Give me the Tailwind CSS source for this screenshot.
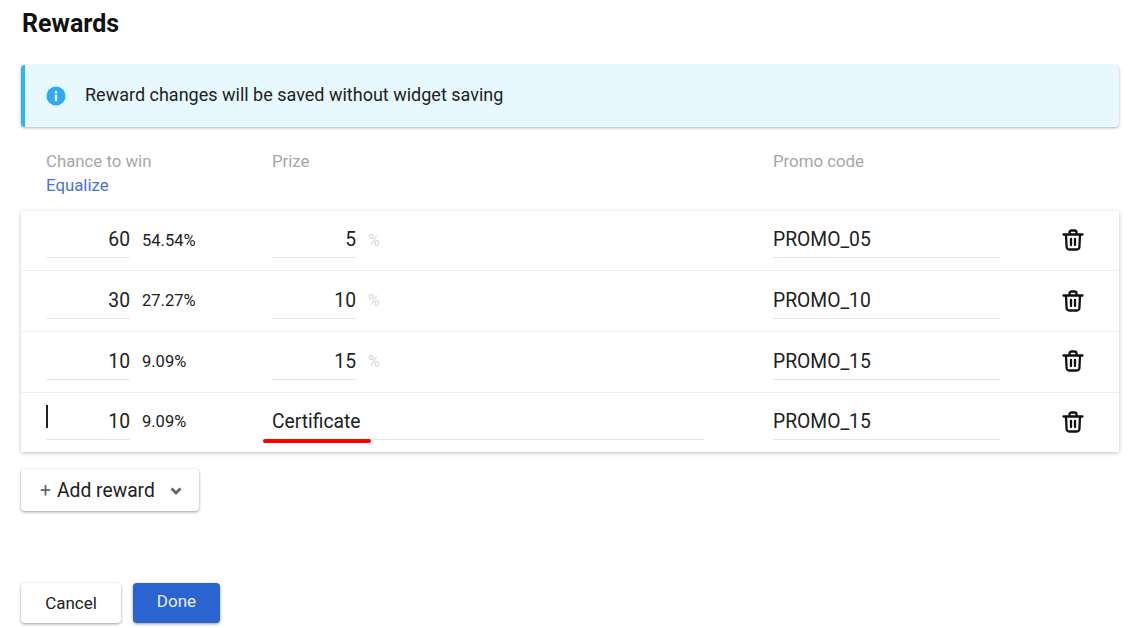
<!DOCTYPE html>
<html lang="en">
<head>
  <meta charset="UTF-8">
  <title>Rewards</title>
  <script src="https://cdn.jsdelivr.net/npm/@tailwindcss/browser@4"></script>
</head>
<body class="bg-white font-['Roboto',sans-serif] text-[#212121] overflow-hidden">
  <div class="w-[1141px] h-[628px] pl-[21px] pr-[22px] overflow-hidden">
    <h1 class="pl-px h-[47px] text-[25px] leading-[47px] font-bold text-[#111]">Rewards</h1>

    <div class="mt-[18px] h-[62px] flex items-center bg-[#e7f9ff] border-l-4 border-[#29b6f6] rounded shadow-[0_1px_3px_rgba(0,0,0,0.3)]">
      <svg class="ml-[21px] w-[20px] h-[20px]" viewBox="0 0 20 20">
        <circle cx="10" cy="10" r="9.500" fill="#2fa9f2"/>
        <rect x="8.800" y="8.600" width="2.400" height="6.600" fill="#e7f9ff"/>
        <rect x="8.800" y="5" width="2.400" height="2.400" fill="#e7f9ff"/>
      </svg>
      <span class="ml-[19px] mb-[4px] text-[18px]">Reward changes will be saved without widget saving</span>
    </div>

    <div class="mt-[22px] h-[62px] flex pl-[25px] text-[16.800px] leading-[24px] text-[#a6a6a6]">
      <div class="w-[226px]">
        <div>Chance to win</div>
        <div class="text-[#4a72d9]">Equalize</div>
      </div>
      <div class="w-[501px]">Prize</div>
      <div>Promo code</div>
    </div>

    <div class="h-[241px] flex flex-col shadow-[0_1px_4px_rgba(0,0,0,0.25)]">
      <div class="h-[60px] flex pl-[25px] border-b-[1.5px] border-[#eeeeee]">
        <div class="w-[84px] h-[47px] border-b-[1.5px] border-[#e4e4e4] text-right text-[19.300px] leading-[57px]">60</div>
        <div class="w-[142px] pl-[12px] text-[16.500px] leading-[59px]">54.54%</div>
        <div class="w-[84px] h-[47px] border-b-[1.5px] border-[#e4e4e4] text-right text-[19.300px] leading-[57px]">5</div>
        <div class="w-[417px] pl-[12px] text-[16px] leading-[59px] text-[#d8d8d8]">%</div>
        <div class="w-[227px] h-[47px] border-b-[1.5px] border-[#e4e4e4] text-[19.300px] leading-[57px]">PROMO_05</div>
        <svg class="ml-[61px] mt-[17px] w-[24px] h-[24px]" viewBox="0 0 24 24" fill="none" stroke="#111" stroke-width="2.300" stroke-linecap="round" stroke-linejoin="round"><path d="M2.500 6.500h19M8.500 6V4.500a2 2 0 0 1 2-2h3a2 2 0 0 1 2 2V6M5 7l.6 12a2.500 2.500 0 0 0 2.500 2.500h7.800a2.500 2.500 0 0 0 2.500-2.500L19 7M10 11v6M14 11v6"/></svg>
      </div>
      <div class="h-[61px] flex pl-[25px] border-b-[1.5px] border-[#eeeeee]">
        <div class="w-[84px] h-[48px] border-b-[1.5px] border-[#e4e4e4] text-right text-[19.300px] leading-[59px]">30</div>
        <div class="w-[142px] pl-[12px] text-[16.500px] leading-[59px]">27.27%</div>
        <div class="w-[84px] h-[48px] border-b-[1.5px] border-[#e4e4e4] text-right text-[19.300px] leading-[59px]">10</div>
        <div class="w-[417px] pl-[12px] text-[16px] leading-[59px] text-[#d8d8d8]">%</div>
        <div class="w-[227px] h-[48px] border-b-[1.5px] border-[#e4e4e4] text-[19.300px] leading-[59px]">PROMO_10</div>
        <svg class="ml-[61px] mt-[18px] w-[24px] h-[24px]" viewBox="0 0 24 24" fill="none" stroke="#111" stroke-width="2.300" stroke-linecap="round" stroke-linejoin="round"><path d="M2.500 6.500h19M8.500 6V4.500a2 2 0 0 1 2-2h3a2 2 0 0 1 2 2V6M5 7l.6 12a2.500 2.500 0 0 0 2.500 2.500h7.800a2.500 2.500 0 0 0 2.500-2.500L19 7M10 11v6M14 11v6"/></svg>
      </div>
      <div class="h-[61px] flex pl-[25px] border-b-[1.5px] border-[#eeeeee]">
        <div class="w-[84px] h-[48px] border-b-[1.5px] border-[#e4e4e4] text-right text-[19.300px] leading-[59px]">10</div>
        <div class="w-[142px] pl-[12px] text-[16.500px] leading-[60px]">9.09%</div>
        <div class="w-[84px] h-[48px] border-b-[1.5px] border-[#e4e4e4] text-right text-[19.300px] leading-[59px]">15</div>
        <div class="w-[417px] pl-[12px] text-[16px] leading-[60px] text-[#d8d8d8]">%</div>
        <div class="w-[227px] h-[48px] border-b-[1.5px] border-[#e4e4e4] text-[19.300px] leading-[59px]">PROMO_15</div>
        <svg class="ml-[61px] mt-[17px] w-[24px] h-[24px]" viewBox="0 0 24 24" fill="none" stroke="#111" stroke-width="2.300" stroke-linecap="round" stroke-linejoin="round"><path d="M2.500 6.500h19M8.500 6V4.500a2 2 0 0 1 2-2h3a2 2 0 0 1 2 2V6M5 7l.6 12a2.500 2.500 0 0 0 2.500 2.500h7.800a2.500 2.500 0 0 0 2.500-2.500L19 7M10 11v6M14 11v6"/></svg>
      </div>
      <div class="h-[59px] flex pl-[25px]">
        <div class="relative w-[84px] h-[47px] border-b-[1.5px] border-[#e4e4e4] text-right text-[19.300px] leading-[57px]">
          10
          <span class="absolute left-0 top-[12px] w-[2px] h-[23px] bg-[#222]"></span>
        </div>
        <div class="w-[142px] pl-[12px] text-[16.500px] leading-[58px]">9.09%</div>
        <div class="relative w-[432px] h-[47px] border-b-[1.5px] border-[#e4e4e4] text-[19.300px] leading-[57px]">
          Certificate
          <span class="absolute left-[-9px] top-[46px] w-[108px] h-[3.500px] rounded-full bg-[#ff0000]"></span>
        </div>
        <div class="w-[69px]"></div>
        <div class="w-[227px] h-[47px] border-b-[1.5px] border-[#e4e4e4] text-[19.300px] leading-[57px]">PROMO_15</div>
        <svg class="ml-[61px] mt-[17px] w-[24px] h-[24px]" viewBox="0 0 24 24" fill="none" stroke="#111" stroke-width="2.300" stroke-linecap="round" stroke-linejoin="round"><path d="M2.500 6.500h19M8.500 6V4.500a2 2 0 0 1 2-2h3a2 2 0 0 1 2 2V6M5 7l.6 12a2.500 2.500 0 0 0 2.500 2.500h7.800a2.500 2.500 0 0 0 2.500-2.500L19 7M10 11v6M14 11v6"/></svg>
      </div>
    </div>

    <button class="mt-[17px] w-[178px] h-[42px] flex items-center pl-[19px] pt-[2px] rounded bg-white text-[19.300px] shadow-[0_1px_3px_rgba(0,0,0,0.4)]">
      <span class="text-[#666] mr-[6px]">+</span>Add reward
      <svg class="ml-[14px] w-[14px] h-[14px]" viewBox="0 0 14 14" fill="none" stroke="#666" stroke-width="2.800"><path d="M2.500 4.500 7 9l4.500-4.500"/></svg>
    </button>

    <div class="mt-[72px] flex gap-[12px]">
      <button class="w-[100px] h-[40px] pt-px rounded bg-white text-[17px] shadow-[0_1px_3px_rgba(0,0,0,0.4)]">Cancel</button>
      <button class="w-[87px] h-[40px] rounded bg-[#2b63d0] text-[#e8f0ff] text-[17px] pb-[2px] shadow-[0_1px_3px_rgba(0,0,0,0.4)]">Done</button>
    </div>
  </div>
</body>
</html>
